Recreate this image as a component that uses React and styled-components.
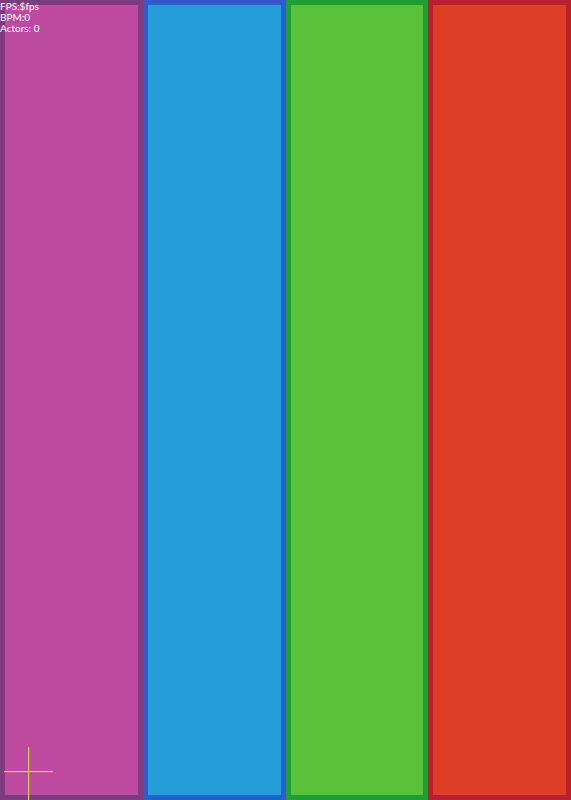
import React from "react";
import styled, { createGlobalStyle } from "styled-components";

const Global = createGlobalStyle`
  html, body {
    margin: 0;
    padding: 0;
    background: #000;
  }
  #root {
    height: 800px;
  }
`;

const lanes = [
  { border: "#7e3b80", fill: "#bd4a9e" },
  { border: "#2b5cc9", fill: "#249dd9" },
  { border: "#1d9f34", fill: "#59c13a" },
  { border: "#b81f30", fill: "#dd3f26" },
];

export default function App() {
  return (
    <>
      <Global />
      <Stage>
        {lanes.map((l, i) => (
          <Lane key={i} $border={l.border} $fill={l.fill} />
        ))}
        <Stats>
          <div>FPS:$fps</div>
          <div>BPM:0</div>
          <div>Actors: 0</div>
        </Stats>
        <Cross>
          <svg width="60" height="60" viewBox="0 0 60 60">
            <rect x="28" y="6" width="1.2" height="54" fill="#c9d34c" />
            <rect x="4" y="30" width="49" height="1.2" fill="#c9d34c" />
          </svg>
        </Cross>
      </Stage>
    </>
  );
}

const Stage = styled.div`
  position: relative;
  display: flex;
  width: 571px;
  height: 800px;
  overflow: hidden;
`;

const Lane = styled.div`
  flex: 1;
  box-sizing: border-box;
  height: 100%;
  background: ${(p) => p.$fill};
  border: 5px solid ${(p) => p.$border};
`;

const Stats = styled.div`
  position: absolute;
  top: 1px;
  left: 0;
  color: #fff;
  font-family: "Lato", "Noto Sans", sans-serif;
  font-size: 10px;
  line-height: 11px;
`;

const Cross = styled.div`
  position: absolute;
  left: 0;
  top: 741px;
  width: 60px;
  height: 60px;
  svg {
    display: block;
  }
`;
